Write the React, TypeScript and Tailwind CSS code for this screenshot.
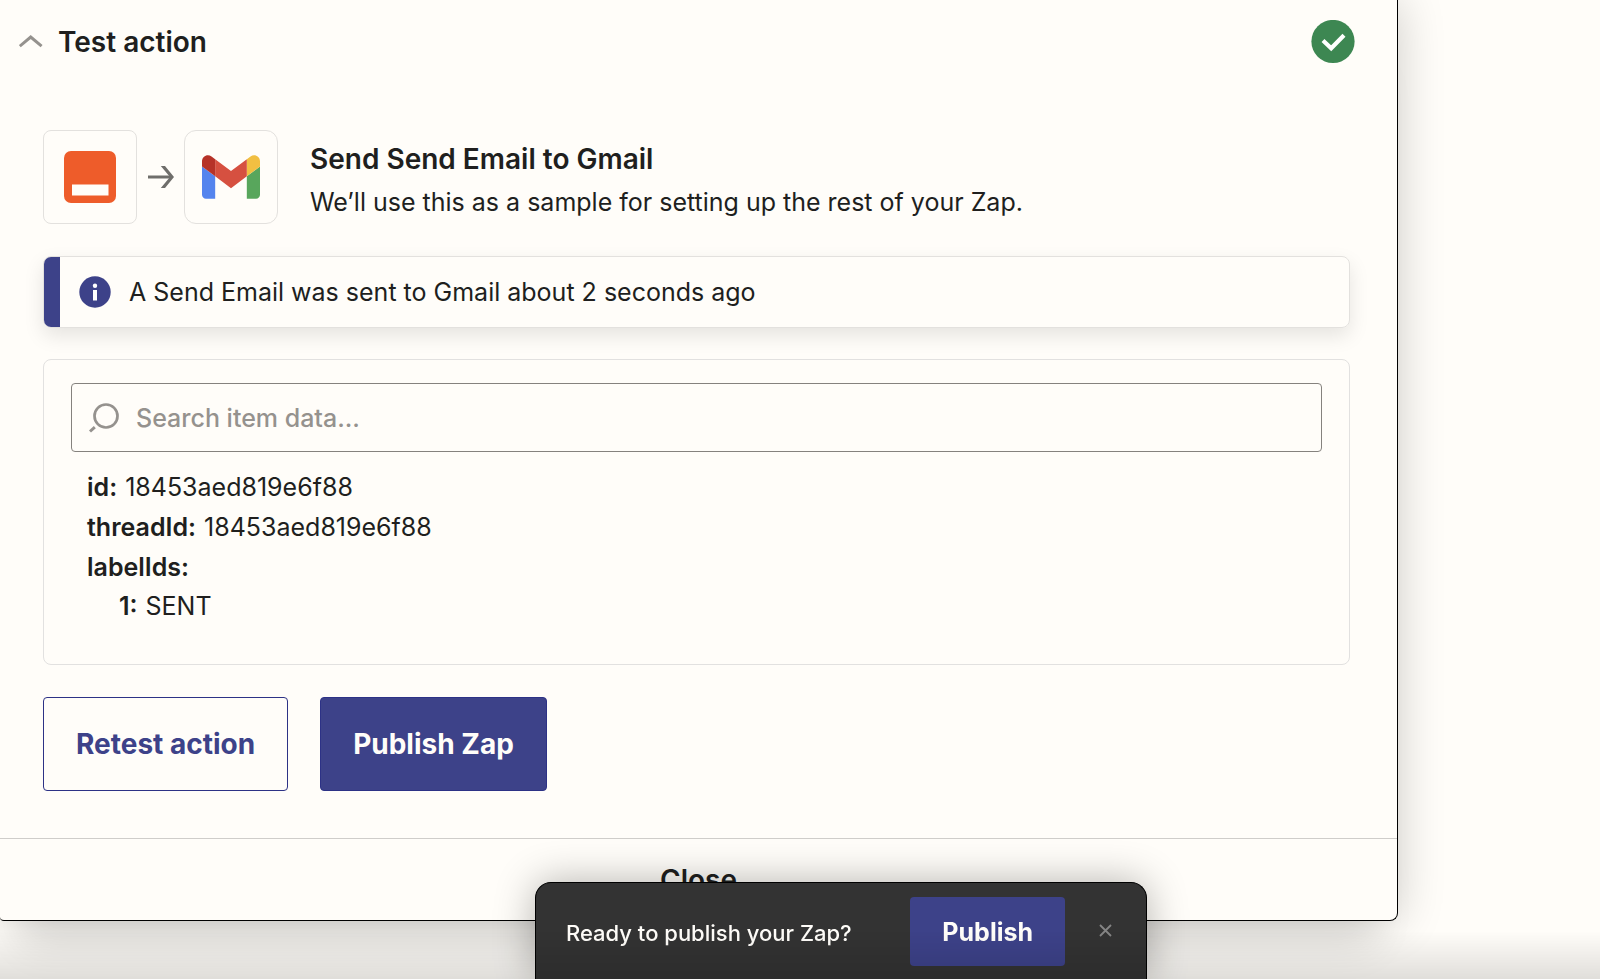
import React from "react";

const fields = [
  { label: "id:", value: "18453aed819e6f88" },
  { label: "threadId:", value: "18453aed819e6f88" },
  { label: "labelIds:", value: "" },
];

function ChevronUp() {
  return (
    <svg className="h-[14px] w-[24px]" viewBox="0 0 24 14" fill="none" aria-hidden="true">
      <path d="M.8 11.200 11.700 2l10.900 9.200" stroke="#95928e" strokeWidth="3" />
    </svg>
  );
}

function SuccessBadge() {
  return (
    <svg className="size-11" viewBox="0 0 44 44" role="img" aria-label="Test succeeded">
      <circle cx="22" cy="21.500" r="21.600" fill="#3d8752" />
      <path d="M12 20.500 20.200 28.200 33 15.200" fill="none" stroke="#fff" strokeWidth="4.200" />
    </svg>
  );
}

function EmailAppIcon() {
  return (
    <svg className="size-[52px]" viewBox="0 0 52 52" aria-hidden="true">
      <rect width="52" height="52" rx="7" fill="#ee5c2a" />
      <rect x="8" y="33.500" width="36.500" height="11" fill="#fffdf9" />
    </svg>
  );
}

function ArrowRight() {
  return (
    <svg className="h-6 w-[26px]" viewBox="0 0 26 24" fill="none" aria-hidden="true">
      <path d="M0 12h24" stroke="#6f6e6b" strokeWidth="3" />
      <path d="M12.800 1h4.200l9 11-9 11h-4.200L22 12z" fill="#6f6e6b" />
    </svg>
  );
}

function GmailIcon() {
  return (
    <svg className="h-11 w-[58px]" viewBox="52 42 88 66" aria-hidden="true">
      <path fill="#5484ee" d="M58 108h14V74L52 59v43c0 3.320 2.690 6 6 6" />
      <path fill="#58a65c" d="M120 108h14c3.320 0 6-2.690 6-6V59l-20 15" />
      <path fill="#f1bf42" d="M120 48v26l20-15v-8c0-7.420-8.470-11.650-14.400-7.200" />
      <path fill="#d65040" d="M72 74V48l24 18 24-18v26L96 92" />
      <path fill="#b63228" d="M52 51v8l20 15V48l-5.600-4.200c-5.940-4.450-14.400-.22-14.400 7.200" />
    </svg>
  );
}

function InfoIcon() {
  return (
    <svg className="size-8" viewBox="0 0 32 32" aria-hidden="true">
      <circle cx="16" cy="16" r="15.700" fill="#3d4289" />
      <circle cx="16" cy="9.700" r="2.200" fill="#fff" />
      <rect x="14" y="14" width="4" height="10.500" fill="#fff" />
    </svg>
  );
}

function SearchIcon() {
  return (
    <svg className="size-8 shrink-0" viewBox="0 0 32 32" fill="none" stroke="#95928e" aria-hidden="true">
      <circle cx="18" cy="14" r="11.500" strokeWidth="2.700" />
      <path d="M2 29.500 6.800 25.200" strokeWidth="3" />
    </svg>
  );
}

function CloseIcon() {
  return (
    <svg className="size-[13px]" viewBox="0 0 13 13" fill="none" aria-hidden="true">
      <path d="M1 1l11 11M12 1 1 12" stroke="#858585" strokeWidth="1.800" />
    </svg>
  );
}

export default function App() {
  return (
    <div className="relative min-h-screen overflow-hidden bg-[#fffdf9] font-['Inter','Liberation_Sans',sans-serif] text-[#201f1e]">
      <main className="mr-[202px] rounded-br-lg rounded-bl-sm border-r border-b border-black bg-[#fffdf9] shadow-[0_0_48px_rgba(0,0,0,0.2),0_48px_40px_-24px_rgba(0,0,0,0.09)]">
        <section className="pt-5 pr-[47px] pb-[47px] pl-[43px]">
          <header className="-mr-[5px] -ml-6 flex h-11 items-center justify-between">
            <button type="button" className="flex items-center gap-[15px] text-[28px] leading-8 font-semibold">
              <ChevronUp />
              Test action
            </button>
            <SuccessBadge />
          </header>

          <div className="mt-[66px] flex items-center">
            <div className="flex size-[94px] shrink-0 items-center justify-center rounded-lg border border-[#e3e1de]">
              <EmailAppIcon />
            </div>
            <div className="flex w-[47px] shrink-0 justify-center">
              <ArrowRight />
            </div>
            <div className="flex size-[94px] shrink-0 items-center justify-center rounded-xl border border-[#e3e1de]">
              <GmailIcon />
            </div>
            <div className="ml-8 pt-2">
              <h2 className="text-[28px] leading-[42px] font-semibold">Send Send Email to Gmail</h2>
              <p className="text-[25px] leading-[44px]">We’ll use this as a sample for setting up the rest of your Zap.</p>
            </div>
          </div>

          <div
            role="status"
            className="mt-8 flex h-[72px] items-center overflow-hidden rounded-lg border border-[#e3e1de] shadow-[0_8px_20px_rgba(0,0,0,0.10)]"
          >
            <div className="mr-[19px] h-full w-4 shrink-0 bg-[#3d4289]" />
            <InfoIcon />
            <p className="ml-[18px] text-[25px] leading-9">A Send Email was sent to Gmail about 2 seconds ago</p>
          </div>

          <div className="mt-[31px] rounded-lg border border-[#e2e1e0] px-[27px] pt-[23px] pb-[39px]">
            <label className="flex h-[69px] items-center gap-4 rounded border border-[#85827e] px-4">
              <SearchIcon />
              <input
                type="search"
                aria-label="Search item data"
                placeholder="Search item data..."
                className="min-w-0 flex-1 bg-transparent text-[25px] leading-9 font-medium outline-none placeholder:text-[#95928e]"
              />
            </label>
            <dl className="mt-[15px] px-4 text-[25px] leading-10">
              {fields.map((field) => (
                <div key={field.label} className="flex gap-2">
                  <dt className="font-semibold">{field.label}</dt>
                  <dd>{field.value}</dd>
                </div>
              ))}
              <div className="flex gap-2 pl-8 leading-[38px]">
                <dt className="font-semibold">1:</dt>
                <dd>SENT</dd>
              </div>
            </dl>
          </div>

          <div className="mt-8 flex gap-8">
            <button
              type="button"
              className="h-[94px] rounded border border-[#2d3286] px-8 text-[28px] leading-8 font-bold text-[#3d4289]"
            >
              Retest action
            </button>
            <button
              type="button"
              className="h-[94px] rounded border border-[#2d3286] bg-[#3d4289] px-8 text-[28px] leading-8 font-bold text-[#fffdf9]"
            >
              Publish Zap
            </button>
          </div>
        </section>

        <footer className="flex h-[82px] justify-center border-t border-[#cfcdca]">
          <button type="button" className="w-full text-[28px] leading-8 font-semibold">
            Close
          </button>
        </footer>
      </main>

      <div className="fixed inset-x-0 bottom-0 flex justify-center pl-[82px]">
        <div className="flex h-[97px] w-[612px] items-start rounded-t-2xl border-x border-t border-black bg-[#333] pt-[14px] pr-[34px] pl-[30px] shadow-[0_0_40px_rgba(0,0,0,0.3)]">
          <p className="flex-1 pt-5 text-[22px] leading-8 font-medium text-[#fffdf9]">Ready to publish your Zap?</p>
          <button type="button" className="h-[69px] rounded bg-[#3d4289] px-8 text-[25px] leading-8 font-bold text-[#fffdf9]">
            Publish
          </button>
          <button type="button" aria-label="Dismiss" className="ml-[34px] pt-[27px]">
            <CloseIcon />
          </button>
        </div>
      </div>
      <div className="pointer-events-none fixed inset-x-0 bottom-0 h-12 bg-linear-to-t from-black/12 to-transparent" />
    </div>
  );
}
